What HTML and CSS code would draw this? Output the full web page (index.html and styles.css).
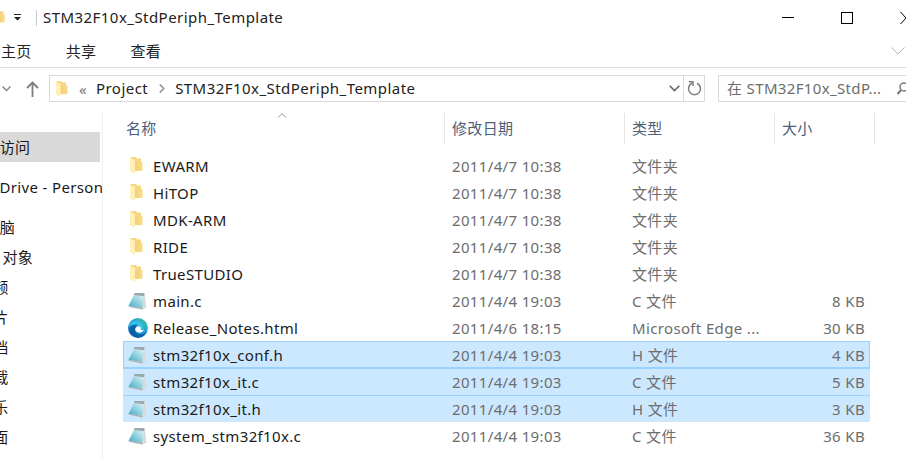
FILE: index.html
```html
<!DOCTYPE html>
<html lang="zh-CN">
<head>
  <meta charset="UTF-8">
  <title>STM32F10x_StdPeriph_Template</title>
  <link rel="stylesheet" href="styles.css">
</head>
<body>
  <svg class="defs" width="0" height="0">
    <defs>
      <linearGradient id="folderBack" x1="0" y1="0" x2="1" y2="0">
        <stop offset="0" stop-color="#f3cf73"/>
        <stop offset="1" stop-color="#fbdc8b"/>
      </linearGradient>
      <linearGradient id="pageFill" x1="0" y1="1" x2="1" y2="0">
        <stop offset="0" stop-color="#38a9c4"/>
        <stop offset="0.5" stop-color="#8fd0dd"/>
        <stop offset="1" stop-color="#e2f3f6"/>
      </linearGradient>
      <linearGradient id="edgeFill" x1="0" y1="1" x2="1" y2="0">
        <stop offset="0" stop-color="#0c59a4"/>
        <stop offset="0.55" stop-color="#1b9de2"/>
        <stop offset="1" stop-color="#52d17a"/>
      </linearGradient>
      <symbol id="folder" viewBox="0 0 13 17">
        <path d="M0.5 0H6L7 1.5H11V14H0.5Z" fill="#f6d680"/>
        <path d="M5 5H12.5V14H5Z" fill="url(#folderBack)"/>
        <path d="M0 0.5L5 3V16.8L0 14.5Z" fill="#fff0b5"/>
      </symbol>
      <symbol id="page" viewBox="0 0 19 18">
        <path d="M6.5 1L16.5 1L18.5 15.5L14.5 17.5L2 15.5Z" fill="#d8dbdc"/>
        <path d="M6 3L16 4.2C15 8 14.5 11 14.3 16L0.5 13.8C2.5 10 4.2 6.5 6 3Z" fill="url(#pageFill)"/>
        <path d="M6.5 1L16.5 1L16 4.2L6 3Z" fill="#9aa9ad"/>
        <path d="M14.3 16L0.5 13.8L0.5 14.6L14.6 17.5Z" fill="#a8afb1"/>
      </symbol>
      <symbol id="edge" viewBox="0 0 20 20">
        <circle cx="10" cy="10" r="10" fill="url(#edgeFill)"/>
        <path d="M0.3 9C1.5 4.5 5 2.5 9 2.8C13 3.2 15.5 6 15.5 9.5C15.5 11 14 12 12 12H7.5C7 9.5 9 7.5 11 8C8 5.5 2.5 6 0.3 9Z" fill="#35c1e1"/>
        <path d="M6.8 11.5C6.8 15 9.5 17 13 16.5C15.5 16.1 17.5 15 18.6 13.5C17 19 10 21.5 5 18C2 16 1 12 2.5 9.5C3.8 7.5 7 6.2 9.5 6.8C7.8 7.8 6.8 9.5 6.8 11.5Z" fill="#0d5fa8"/>
        <path d="M7.2 12C7.2 9.7 9.3 7.8 11.2 8.3C12.5 8.7 13 9.8 12.7 11C12.4 12 14 12.4 15.5 11.5L15.4 12.8C14 15 9 16 7.2 12Z" fill="#fff"/>
      </symbol>
    </defs>
  </svg>

  <div class="window">
    <header class="titlebar">
      <svg class="title-folder" width="6" height="15"><use href="#folder" x="-7" width="13" height="15"/></svg>
      <svg class="qat-arrow" width="8" height="7" viewBox="0 0 8 7"><path d="M0 0H7V1H0ZM0 3H7L3.5 6.5Z" fill="#222"/></svg>
      <span class="title-sep"></span>
      <span class="title-text">STM32F10x_StdPeriph_Template</span>
      <div class="win-btns">
        <svg class="btn-min" width="12" height="1"><rect width="12" height="1" fill="#000"/></svg>
        <svg class="btn-max" width="12" height="12"><rect x="0.5" y="0.5" width="11" height="11" fill="none" stroke="#000"/></svg>
        <svg class="btn-close" width="6" height="12"><path d="M0.5 0L6 6M0.5 12L6 6" stroke="#000" fill="none"/></svg>
      </div>
    </header>

    <nav class="ribbon">
      <span class="tab tab-home">主页</span>
      <span class="tab">共享</span>
      <span class="tab">查看</span>
      <svg class="ribbon-toggle" width="14" height="8"><path d="M0.5 0.5L7 7L13.5 0.5" stroke="#b5b5b5" fill="none"/></svg>
    </nav>

    <div class="addressbar">
      <svg class="nav-recent" width="9" height="6"><path d="M0.5 0.5L4.5 4.5L8.5 0.5" stroke="#8a8a8a" stroke-width="1.5" fill="none"/></svg>
      <svg class="nav-up" width="13" height="16" viewBox="0 0 13 16"><path d="M6.5 16V1.5M1 7L6.5 1.5L12 7" stroke="#7d7d7d" stroke-width="1.8" fill="none"/></svg>
      <div class="path-box">
        <svg width="12" height="16"><use href="#folder" width="12" height="16"/></svg>
        <span class="crumb-more">«</span>
        <span class="crumb">Project</span>
        <svg class="crumb-arrow" width="6" height="9"><path d="M0.8 0.5L4.8 4.5L0.8 8.5" stroke="#8a8a8a" stroke-width="1.4" fill="none"/></svg>
        <span class="crumb">STM32F10x_StdPeriph_Template</span>
        <svg class="path-drop" width="11" height="7"><path d="M0.7 0.7L5.5 5.5L10.3 0.7" stroke="#666" stroke-width="1.6" fill="none"/></svg>
        <span class="path-refresh">
          <svg width="15" height="15" viewBox="0 0 15 15"><path d="M5 2.2A6 6 0 1 0 10 2.2" stroke="#7d7d7d" stroke-width="1.5" fill="none"/><path d="M1.8 0.8H6V5" stroke="#7d7d7d" stroke-width="1.5" fill="none"/></svg>
        </span>
      </div>
      <div class="search-box">
        <span class="search-text">在 STM32F10x_StdP...</span>
        <svg class="search-icon" width="10" height="14" viewBox="0 0 10 14"><circle cx="7" cy="5" r="4" stroke="#777" stroke-width="1.5" fill="none"/><path d="M4 8L0.5 12" stroke="#777" stroke-width="2"/></svg>
      </div>
    </div>

    <div class="main">
      <aside class="sidebar">
        <div class="nav-item nav-active">快速访问</div>
        <div class="nav-item nav-drive">OneDrive - Personal</div>
        <div class="nav-item nav-pc">此电脑</div>
        <div class="nav-item nav-child">3D 对象</div>
        <div class="nav-item nav-child">视频</div>
        <div class="nav-item nav-child">图片</div>
        <div class="nav-item nav-child">文档</div>
        <div class="nav-item nav-child">下载</div>
        <div class="nav-item nav-child">音乐</div>
        <div class="nav-item nav-child">桌面</div>
      </aside>

      <section class="files">
        <div class="file-head">
          <div class="col-h col-h-name">名称</div>
          <div class="col-h col-h-date">修改日期</div>
          <div class="col-h col-h-type">类型</div>
          <div class="col-h col-h-size">大小</div>
          <svg class="sort-caret" width="10" height="5"><path d="M0.5 5L5 0.7L9.5 5" stroke="#999" fill="none"/></svg>
        </div>
        <div class="file-list">
          <div class="row"><span class="name"><svg class="ico-folder"><use href="#folder"/></svg>EWARM</span><span class="date">2011/4/7 10:38</span><span class="type">文件夹</span><span class="size"></span></div>
          <div class="row"><span class="name"><svg class="ico-folder"><use href="#folder"/></svg>HiTOP</span><span class="date">2011/4/7 10:38</span><span class="type">文件夹</span><span class="size"></span></div>
          <div class="row"><span class="name"><svg class="ico-folder"><use href="#folder"/></svg>MDK-ARM</span><span class="date">2011/4/7 10:38</span><span class="type">文件夹</span><span class="size"></span></div>
          <div class="row"><span class="name"><svg class="ico-folder"><use href="#folder"/></svg>RIDE</span><span class="date">2011/4/7 10:38</span><span class="type">文件夹</span><span class="size"></span></div>
          <div class="row"><span class="name"><svg class="ico-folder"><use href="#folder"/></svg>TrueSTUDIO</span><span class="date">2011/4/7 10:38</span><span class="type">文件夹</span><span class="size"></span></div>
          <div class="row"><span class="name"><svg class="ico-file"><use href="#page"/></svg>main.c</span><span class="date">2011/4/4 19:03</span><span class="type">C 文件</span><span class="size">8 KB</span></div>
          <div class="row"><span class="name"><svg class="ico-edge"><use href="#edge"/></svg>Release_Notes.html</span><span class="date">2011/4/6 18:15</span><span class="type">Microsoft Edge ...</span><span class="size">30 KB</span></div>
          <div class="row selected focused"><span class="name"><svg class="ico-file"><use href="#page"/></svg>stm32f10x_conf.h</span><span class="date">2011/4/4 19:03</span><span class="type">H 文件</span><span class="size">4 KB</span></div>
          <div class="row selected"><span class="name"><svg class="ico-file"><use href="#page"/></svg>stm32f10x_it.c</span><span class="date">2011/4/4 19:03</span><span class="type">C 文件</span><span class="size">5 KB</span></div>
          <div class="row selected"><span class="name"><svg class="ico-file"><use href="#page"/></svg>stm32f10x_it.h</span><span class="date">2011/4/4 19:03</span><span class="type">H 文件</span><span class="size">3 KB</span></div>
          <div class="row"><span class="name"><svg class="ico-file"><use href="#page"/></svg>system_stm32f10x.c</span><span class="date">2011/4/4 19:03</span><span class="type">C 文件</span><span class="size">36 KB</span></div>
        </div>
      </section>
    </div>
  </div>
</body>
</html>
```

FILE: styles.css
```css
html, body {
  margin: 0;
  padding: 0;
  background: #fff;
}
body {
  width: 906px;
  height: 459px;
  overflow: hidden;
  font-family: "Noto Sans", "Noto Sans CJK SC", sans-serif;
  font-size: 15px;
  letter-spacing: 0.35px;
  color: #1a1a1a;
}
.defs {
  display: block;
  height: 0;
}
svg {
  display: block;
  flex: none;
}
.window {
  display: flex;
  flex-direction: column;
  height: 459px;
}

/* title bar */
.titlebar {
  display: flex;
  align-items: center;
  height: 35px;
  flex: none;
}
.qat-arrow {
  margin-left: 8px;
}
.title-sep {
  width: 1px;
  height: 16px;
  margin-left: 14px;
  background: #c8c8c8;
}
.title-text {
  margin: 0 0 2px 6px;
  letter-spacing: 0.45px;
  color: #222;
}
.win-btns {
  display: flex;
  align-items: center;
  margin-left: auto;
}
.btn-max {
  margin-left: 47px;
}
.btn-close {
  margin-left: 47px;
}

/* ribbon */
.ribbon {
  display: flex;
  align-items: center;
  height: 32px;
  flex: none;
  border-bottom: 1px solid #dadada;
}
.tab {
  margin: 0 0 2px 34px;
  color: #222;
}
.tab-home {
  margin-left: 1px;
}
.ribbon-toggle {
  margin-left: auto;
  margin-right: 1px;
}

/* address row */
.addressbar {
  display: flex;
  align-items: center;
  height: 27px;
  margin-top: 7px;
  flex: none;
}
.nav-recent {
  margin-left: 2px;
}
.nav-up {
  margin-left: 15px;
}
.path-box {
  display: flex;
  align-items: center;
  flex: none;
  width: 656px;
  height: 27px;
  margin-left: 10px;
  padding-left: 6px;
  box-sizing: border-box;
  border: 1px solid #d9d9d9;
}
.crumb-more {
  margin-left: 11px;
  color: #777;
}
.crumb {
  margin: 0 0 2px 9px;
  letter-spacing: 0.45px;
  color: #222;
}
.crumb-arrow {
  margin-left: 11px;
}
.crumb-arrow + .crumb {
  margin-left: 10px;
}
.path-drop {
  margin-left: auto;
  margin-right: 3px;
}
.path-refresh {
  display: flex;
  align-items: center;
  justify-content: center;
  width: 20px;
  height: 25px;
  border-left: 1px solid #d9d9d9;
}
.search-box {
  display: flex;
  align-items: center;
  justify-content: space-between;
  flex: none;
  width: 189px;
  height: 27px;
  margin-left: 13px;
  padding-left: 8px;
  box-sizing: border-box;
  border: 1px solid #d9d9d9;
  border-right: 0;
  color: #6d6d6d;
}
.search-text {
  margin-bottom: 2px;
}

/* sidebar */
.main {
  display: flex;
  flex: 1;
  margin-top: 11px;
  min-height: 0;
}
.sidebar {
  width: 102px;
  flex: none;
  padding-top: 19px;
  overflow: hidden;
  border-right: 1px solid #f0f0f0;
}
.nav-item {
  height: 30px;
  line-height: 30px;
  white-space: nowrap;
  margin-left: -31px;
}
.nav-active {
  width: 100px;
  background: #d9d9d9;
  margin-left: 0;
  text-indent: -31px;
}
.nav-drive {
  margin-top: 10px;
}
.nav-pc {
  margin-top: 10px;
}
.nav-child {
  margin-left: -22px;
}

/* file list */
.files {
  width: 803px;
  padding-left: 20px;
  box-sizing: border-box;
}
.file-head {
  position: relative;
  display: flex;
  height: 31px;
  color: #4c607a;
}
.col-h {
  display: flex;
  align-items: center;
  box-sizing: border-box;
  padding: 0 0 2px 7px;
  border-right: 1px solid #e5e5e5;
}
.col-h-name {
  width: 322px;
  padding-left: 3px;
}
.col-h-date {
  width: 180px;
}
.col-h-type {
  width: 150px;
}
.col-h-size {
  width: 100px;
}
.sort-caret {
  position: absolute;
  left: 154px;
  top: 0;
}
.file-list {
  margin-top: 8px;
  width: 747px;
}
.row {
  display: grid;
  grid-template-columns: 329px 180px 150px 88px;
  align-items: center;
  height: 27px;
  box-sizing: border-box;
  white-space: nowrap;
  color: #6d6d6d;
}
.name {
  display: flex;
  align-items: center;
  padding-left: 5px;
  color: #1a1a1a;
}
.ico-folder {
  width: 13px;
  height: 17px;
  margin: 0 10px 0 2px;
}
.ico-file {
  width: 19px;
  height: 18px;
  margin-right: 6px;
}
.ico-edge {
  width: 20px;
  height: 20px;
  margin-right: 5px;
}
.size {
  text-align: right;
  padding-right: 5px;
}
.selected {
  background: #cce8ff;
  box-shadow: inset 0 1px 0 #99d1ff;
}
.focused {
  box-shadow: inset 0 0 0 1px #99d1ff;
}
```
